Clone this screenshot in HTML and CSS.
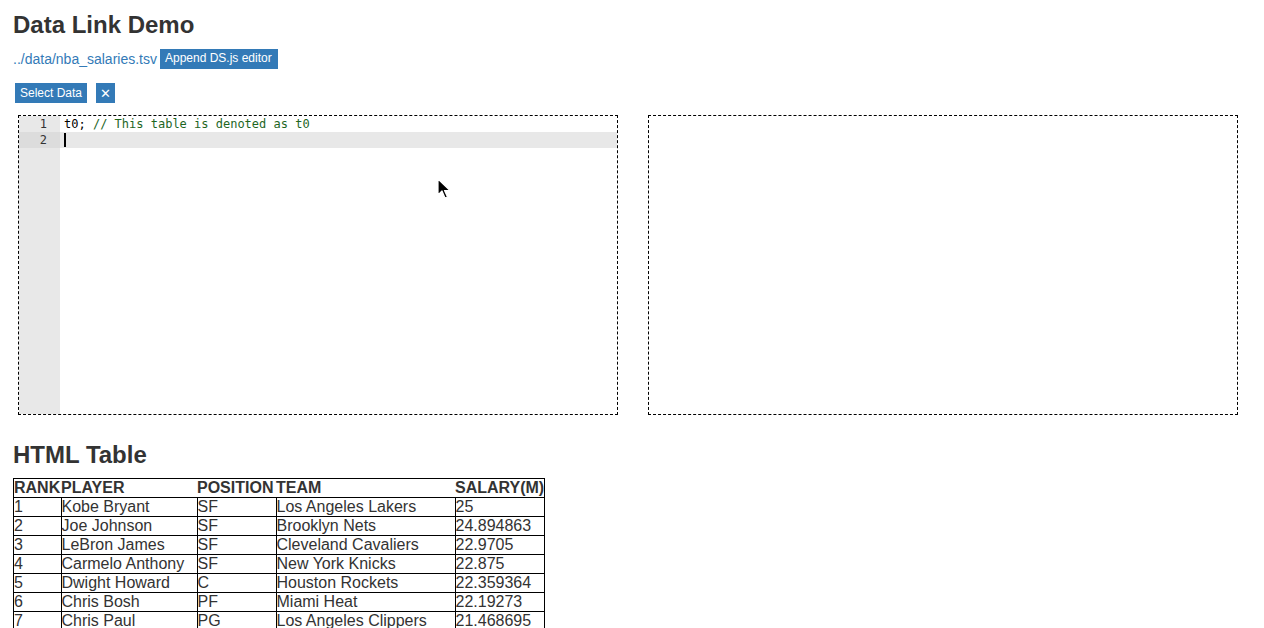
FILE: index.html
```html
<!DOCTYPE html>
<html>
<head>
<meta charset="utf-8">
<link rel="stylesheet" href="styles.css">
</head>
<body>
<div class="page">
  <h1 class="title">Data Link Demo</h1>
  <div class="linkrow">
    <a class="link" href="#">../data/nba_salaries.tsv</a><button class="btn btn-append">Append DS.js editor</button>
  </div>
  <div class="toolrow">
    <button class="btn btn-lg">Select Data</button>
    <button class="btn btn-x">✕</button>
  </div>
  <div class="panes">
    <div class="editor">
      <div class="gutter">
        <div class="gline">1</div>
        <div class="gline active">2</div>
      </div>
      <div class="code">
        <div class="cline"><span class="plain">t0; </span><span class="comment">// This table is denoted as t0</span></div>
        <div class="cline active"><span class="caret"></span></div>
      </div>
    </div>
    <div class="output"></div>
  </div>
  <h2 class="subtitle">HTML Table</h2>
  <table class="data">
    <thead>
      <tr><th class="c1">RANK</th><th class="c2">PLAYER</th><th class="c3">POSITION</th><th class="c4">TEAM</th><th class="c5">SALARY(M)</th></tr>
    </thead>
    <tbody>
      <tr><td>1</td><td>Kobe Bryant</td><td>SF</td><td>Los Angeles Lakers</td><td>25</td></tr>
      <tr><td>2</td><td>Joe Johnson</td><td>SF</td><td>Brooklyn Nets</td><td>24.894863</td></tr>
      <tr><td>3</td><td>LeBron James</td><td>SF</td><td>Cleveland Cavaliers</td><td>22.9705</td></tr>
      <tr><td>4</td><td>Carmelo Anthony</td><td>SF</td><td>New York Knicks</td><td>22.875</td></tr>
      <tr><td>5</td><td>Dwight Howard</td><td>C</td><td>Houston Rockets</td><td>22.359364</td></tr>
      <tr><td>6</td><td>Chris Bosh</td><td>PF</td><td>Miami Heat</td><td>22.19273</td></tr>
      <tr><td>7</td><td>Chris Paul</td><td>PG</td><td>Los Angeles Clippers</td><td>21.468695</td></tr>
      <tr><td>8</td><td>Kevin Durant</td><td>SF</td><td>Oklahoma City Thunder</td><td>20.158622</td></tr>
    </tbody>
  </table>
</div>
<svg class="cursor" width="14" height="22" viewBox="0 0 14 22">
  <path d="M1 1 L1 17 L5 13 L8 20 L10.5 19 L7.5 12.5 L13 12.5 Z" fill="#000" stroke="#fff" stroke-width="1.2" stroke-linejoin="round"/>
</svg>
</body>
</html>
```

FILE: styles.css
```css
html, body {
  margin: 0;
  padding: 0;
  background: #fff;
}
body {
  font-family: "Liberation Sans", Arial, sans-serif;
  color: #333;
  font-size: 14px;
}
.page {
  padding: 0 0 0 13px;
}
.title {
  font-size: 24px;
  font-weight: bold;
  line-height: 26px;
  margin: 12px 0 0 0;
  color: #333;
}
.linkrow {
  display: flex;
  align-items: center;
  height: 21px;
  margin-top: 10px;
}
.link {
  color: #337ab7;
  text-decoration: none;
  font-size: 14px;
  margin-right: 3px;
}
.btn {
  background: #337ab7;
  color: #fff;
  border: none;
  font-family: "Liberation Sans", Arial, sans-serif;
  font-size: 12px;
  height: 19px;
  padding: 0 5px;
  line-height: 19px;
  margin: 0;
  border-radius: 0;
}
.btn-append {
  padding: 0 6px 0 5px;
  height: 20px;
}
.toolrow {
  display: flex;
  align-items: center;
  gap: 9px;
  margin-top: 14px;
  padding-left: 2px;
}
.btn-lg {
  height: 20px;
}
.btn-x {
  width: 19px;
  height: 20px;
  padding: 0;
  font-size: 13px;
}
.panes {
  display: flex;
  gap: 30px;
  margin-top: 12px;
  padding-left: 5px;
}
.editor {
  width: 598px;
  height: 298px;
  border: 1px dashed #000;
  display: flex;
  font-family: "DejaVu Sans Mono", monospace;
  font-size: 12px;
}
.gutter {
  width: 41px;
  background: #e8e8e8;
}
.gline {
  height: 16px;
  line-height: 16px;
  text-align: right;
  padding-right: 13px;
  color: #333;
}
.gline.active {
  background: #dcdcdc;
}
.code {
  flex: 1;
}
.cline {
  height: 16px;
  line-height: 16px;
  padding-left: 4px;
  white-space: pre;
}
.cline.active {
  background: #e8e8e8;
}
.plain { color: #000; }
.comment { color: #1e661f; }
.caret {
  display: inline-block;
  width: 2px;
  height: 14px;
  background: #000;
  vertical-align: middle;
  margin-top: -1px;
}
.output {
  width: 588px;
  height: 298px;
  border: 1px dashed #000;
}
.subtitle {
  font-size: 24px;
  font-weight: bold;
  line-height: 26px;
  margin: 27px 0 0 0;
  color: #333;
}
.data {
  border-collapse: collapse;
  border: 1px solid #000;
  margin-top: 10px;
  font-size: 16px;
  color: #333;
  table-layout: fixed;
}
.data th {
  text-align: left;
  font-weight: bold;
  padding: 0;
  line-height: 18px;
  border: none;
}
.data td {
  border: 1px solid #000;
  padding: 0;
  line-height: 18px;
  white-space: nowrap;
}
.c1 { width: 47px; }
.c2 { width: 136px; }
.c3 { width: 79px; }
.c4 { width: 179px; }
.c5 { width: 89px; }
.cursor {
  position: absolute;
  left: 437px;
  top: 178px;
}
```
